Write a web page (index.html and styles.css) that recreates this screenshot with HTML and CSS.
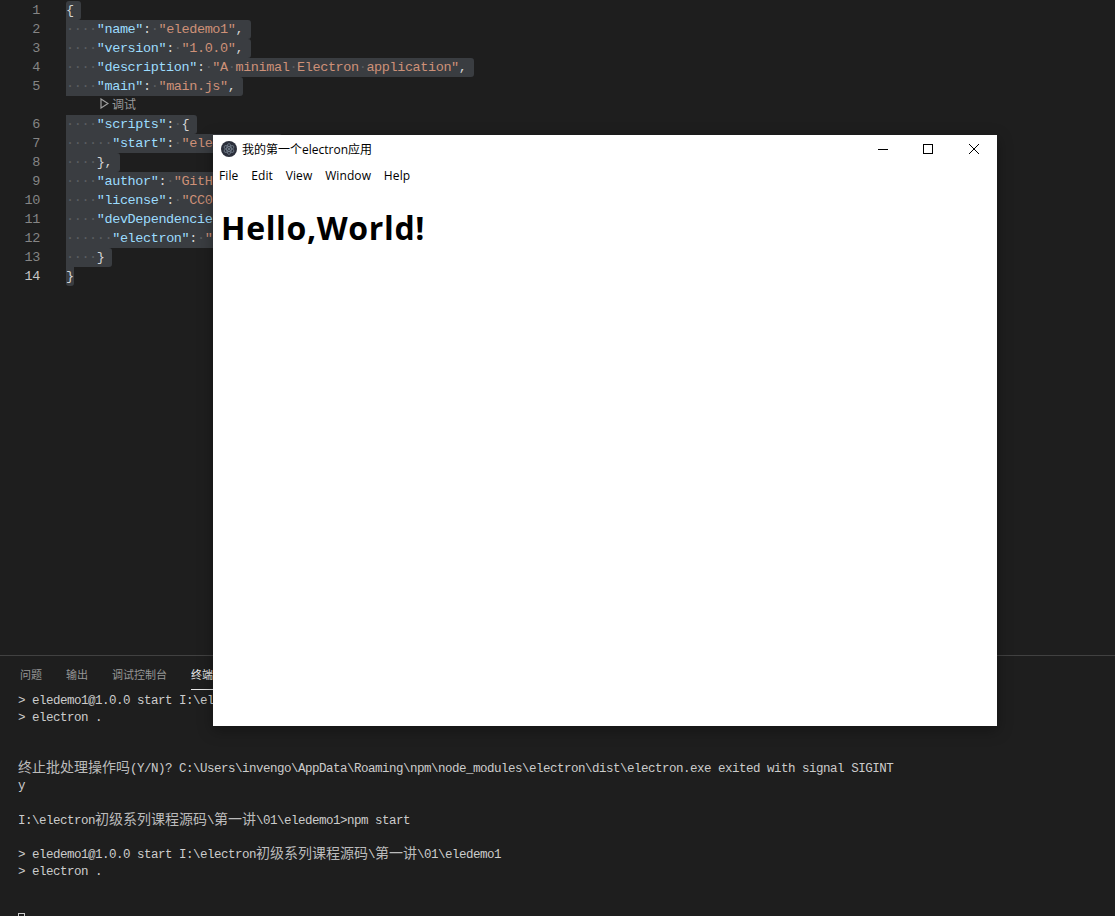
FILE: index.html
```html
<!DOCTYPE html>
<html lang="en">
<head>
  <meta charset="UTF-8">
  <title>package.json - eledemo1</title>
  <link rel="stylesheet" href="styles.css">
</head>
<body>
  <!-- Editor -->
  <div class="editor">
    <div class="line"><span class="num">1</span><span class="sel first">{<span class="nl"></span></span></div>
    <div class="line"><span class="num">2</span><span class="sel"><i>····</i><b>"name"</b>:<i>·</i><u>"eledemo1"</u>,<span class="nl"></span></span></div>
    <div class="line"><span class="num">3</span><span class="sel"><i>····</i><b>"version"</b>:<i>·</i><u>"1.0.0"</u>,<span class="nl"></span></span></div>
    <div class="line"><span class="num">4</span><span class="sel"><i>····</i><b>"description"</b>:<i>·</i><u>"A<i>·</i>minimal<i>·</i>Electron<i>·</i>application"</u>,<span class="nl"></span></span></div>
    <div class="line"><span class="num">5</span><span class="sel"><i>····</i><b>"main"</b>:<i>·</i><u>"main.js"</u>,<span class="nl"></span></span></div>
    <div class="line lens">
      <svg class="lens-icon" width="9" height="11" viewBox="0 0 9 11"><path d="M1 1 L8 5.5 L1 10 Z" fill="none" stroke="#a0a0a0" stroke-width="1.2"/></svg>
      <span>调试</span>
    </div>
    <div class="line"><span class="num">6</span><span class="sel"><i>····</i><b>"scripts"</b>:<i>·</i>{<span class="nl"></span></span></div>
    <div class="line"><span class="num">7</span><span class="sel"><i>······</i><b>"start"</b>:<i>·</i><u>"electron<i>·</i>."</u><span class="nl"></span></span></div>
    <div class="line"><span class="num">8</span><span class="sel"><i>····</i>},<span class="nl"></span></span></div>
    <div class="line"><span class="num">9</span><span class="sel"><i>····</i><b>"author"</b>:<i>·</i><u>"GitHub"</u>,<span class="nl"></span></span></div>
    <div class="line"><span class="num">10</span><span class="sel"><i>····</i><b>"license"</b>:<i>·</i><u>"CC0-1.0"</u>,<span class="nl"></span></span></div>
    <div class="line"><span class="num">11</span><span class="sel"><i>····</i><b>"devDependencies"</b>:<i>·</i>{<span class="nl"></span></span></div>
    <div class="line"><span class="num">12</span><span class="sel"><i>······</i><b>"electron"</b>:<i>·</i><u>"^16.0.0"</u><span class="nl"></span></span></div>
    <div class="line"><span class="num">13</span><span class="sel"><i>····</i>}<span class="nl"></span></span></div>
    <div class="line"><span class="num active">14</span><span class="sel last">}</span></div>
  </div>

  <!-- Bottom panel -->
  <div class="panel">
    <div class="tabs">
      <span class="tab">问题</span>
      <span class="tab">输出</span>
      <span class="tab">调试控制台</span>
      <span class="tab current">终端</span>
    </div>
    <div class="terminal">
      <div class="row">&gt; eledemo1@1.0.0 start I:\electron<span class="cn">初级系列课程源码</span>\<span class="cn">第一讲</span>\01\eledemo1</div>
      <div class="row">&gt; electron .</div>
      <div class="row"></div>
      <div class="row"></div>
      <div class="row"><span class="cn">终止批处理操作吗</span>(Y/N)? C:\Users\invengo\AppData\Roaming\npm\node_modules\electron\dist\electron.exe exited with signal SIGINT</div>
      <div class="row">y</div>
      <div class="row"></div>
      <div class="row">I:\electron<span class="cn">初级系列课程源码</span>\<span class="cn">第一讲</span>\01\eledemo1&gt;npm start</div>
      <div class="row"></div>
      <div class="row">&gt; eledemo1@1.0.0 start I:\electron<span class="cn">初级系列课程源码</span>\<span class="cn">第一讲</span>\01\eledemo1</div>
      <div class="row">&gt; electron .</div>
      <div class="row"></div>
      <div class="row"></div>
      <div class="row"><span class="cursor"></span></div>
    </div>
  </div>

  <!-- Electron app window on top -->
  <div class="window">
    <div class="titlebar">
      <svg class="logo" width="16" height="16" viewBox="0 0 16 16">
        <circle cx="8" cy="8" r="8" fill="#2b2f3b"/>
        <g fill="none" stroke="#7f8d99" stroke-width="0.7">
          <ellipse cx="8" cy="8" rx="5.5" ry="2.2" transform="rotate(30 8 8)"/>
          <ellipse cx="8" cy="8" rx="5.5" ry="2.2" transform="rotate(90 8 8)"/>
          <ellipse cx="8" cy="8" rx="5.5" ry="2.2" transform="rotate(150 8 8)"/>
        </g>
        <circle cx="8" cy="8" r="1" fill="#7f8d99"/>
      </svg>
      <span class="win-title">我的第一个electron应用</span>
      <div class="controls">
        <svg class="ctrl" width="46" height="28" viewBox="0 0 46 28"><path d="M19 14.5 H29" stroke="#000" fill="none"/></svg>
        <svg class="ctrl" width="46" height="28" viewBox="0 0 46 28"><rect x="18.5" y="9.5" width="9" height="9" stroke="#000" fill="none"/></svg>
        <svg class="ctrl" width="46" height="28" viewBox="0 0 46 28"><path d="M18 9 L28 19 M28 9 L18 19" stroke="#000" fill="none"/></svg>
      </div>
    </div>
    <div class="menubar">
      <span>File</span><span>Edit</span><span>View</span><span>Window</span><span>Help</span>
    </div>
    <h1 class="hello">Hello,World!</h1>
  </div>
</body>
</html>
```

FILE: styles.css
```css
html, body {
  height: 100%;
  margin: 0;
}

body {
  display: flex;
  flex-direction: column;
  height: 916px;
  overflow: hidden;
  background-color: #1e1e1e;
  font-family: "Liberation Mono", "Noto Sans CJK SC", monospace;
}

/* Editor */
.editor {
  height: 655px;
  padding-top: 1px;
  box-sizing: border-box;
  font-size: 13.5px;
  letter-spacing: -0.4px;
  color: #d4d4d4;
}

.line {
  display: flex;
  height: 19px;
  line-height: 19px;
  white-space: pre;
}

.num {
  width: 40px;
  margin-right: 26px;
  text-align: right;
  color: #858585;
  flex-shrink: 0;
}

.num.active {
  color: #c6c6c6;
}

.sel {
  background-color: #3a3d41;
  border-radius: 0 3px 3px 0;
}

.sel.first {
  border-radius: 3px 3px 3px 0;
}

.sel.last {
  border-radius: 0 0 3px 3px;
}

.nl {
  display: inline-block;
  width: 7.7px;
}

.sel b {
  font-weight: normal;
  color: #9cdcfe;
}

.sel u {
  text-decoration: none;
  color: #ce9178;
}

/* rendered whitespace */
.sel i {
  font-style: normal;
  color: #5a5d62;
}

.lens {
  align-items: center;
  box-sizing: border-box;
  padding: 0 0 4px 100px;
  gap: 3px;
  font-family: "Noto Sans CJK SC", sans-serif;
  font-size: 12px;
  letter-spacing: 0;
  color: #999999;
}

/* Panel */
.panel {
  flex: 1;
  min-height: 0;
  overflow: hidden;
  border-top: 1px solid #414141;
}

.tabs {
  display: flex;
  gap: 24px;
  height: 33px;
  padding-left: 20px;
  font-family: "Noto Sans CJK SC", sans-serif;
  font-size: 11px;
}

.tab {
  height: 33px;
  line-height: 36px;
  color: #969696;
}

.tab.current {
  color: #e7e7e7;
  box-shadow: 0 1px 0 #e7e7e7;
}

.terminal {
  padding: 4px 0 0 18px;
  font-size: 12.5px;
  letter-spacing: -0.5px;
  color: #cccccc;
}

.row {
  height: 17.1px;
  line-height: 17px;
  white-space: pre;
}

.cn {
  font-family: "Noto Sans CJK SC", sans-serif;
  font-size: 14px;
  line-height: 0;
  letter-spacing: 0;
  color: #bbbbbb;
}

.cursor {
  display: inline-block;
  vertical-align: top;
  width: 7px;
  height: 17px;
  margin-top: -2px;
  box-sizing: border-box;
  border: 1px solid #cccccc;
}

/* App window */
.window {
  position: absolute;
  left: 213px;
  top: 135px;
  width: 784px;
  height: 591px;
  background-color: #ffffff;
  box-shadow: 0 4px 14px rgba(0, 0, 0, 0.35);
  font-family: "Open Sans", "Noto Sans CJK SC", sans-serif;
  color: #000000;
}

.titlebar {
  display: flex;
  align-items: center;
  height: 28px;
  padding-left: 8px;
}

.win-title {
  margin-left: 5px;
  font-size: 12px;
}

.controls {
  display: flex;
  margin-left: auto;
}

.menubar {
  display: flex;
  gap: 12.8px;
  height: 25px;
  line-height: 25px;
  padding-left: 6px;
  font-size: 12px;
  letter-spacing: 0.1px;
}

.hello {
  margin: 20px 0 0 8px;
  font-size: 32px;
  font-weight: bold;
  line-height: 40px;
  letter-spacing: 0.65px;
}
```
